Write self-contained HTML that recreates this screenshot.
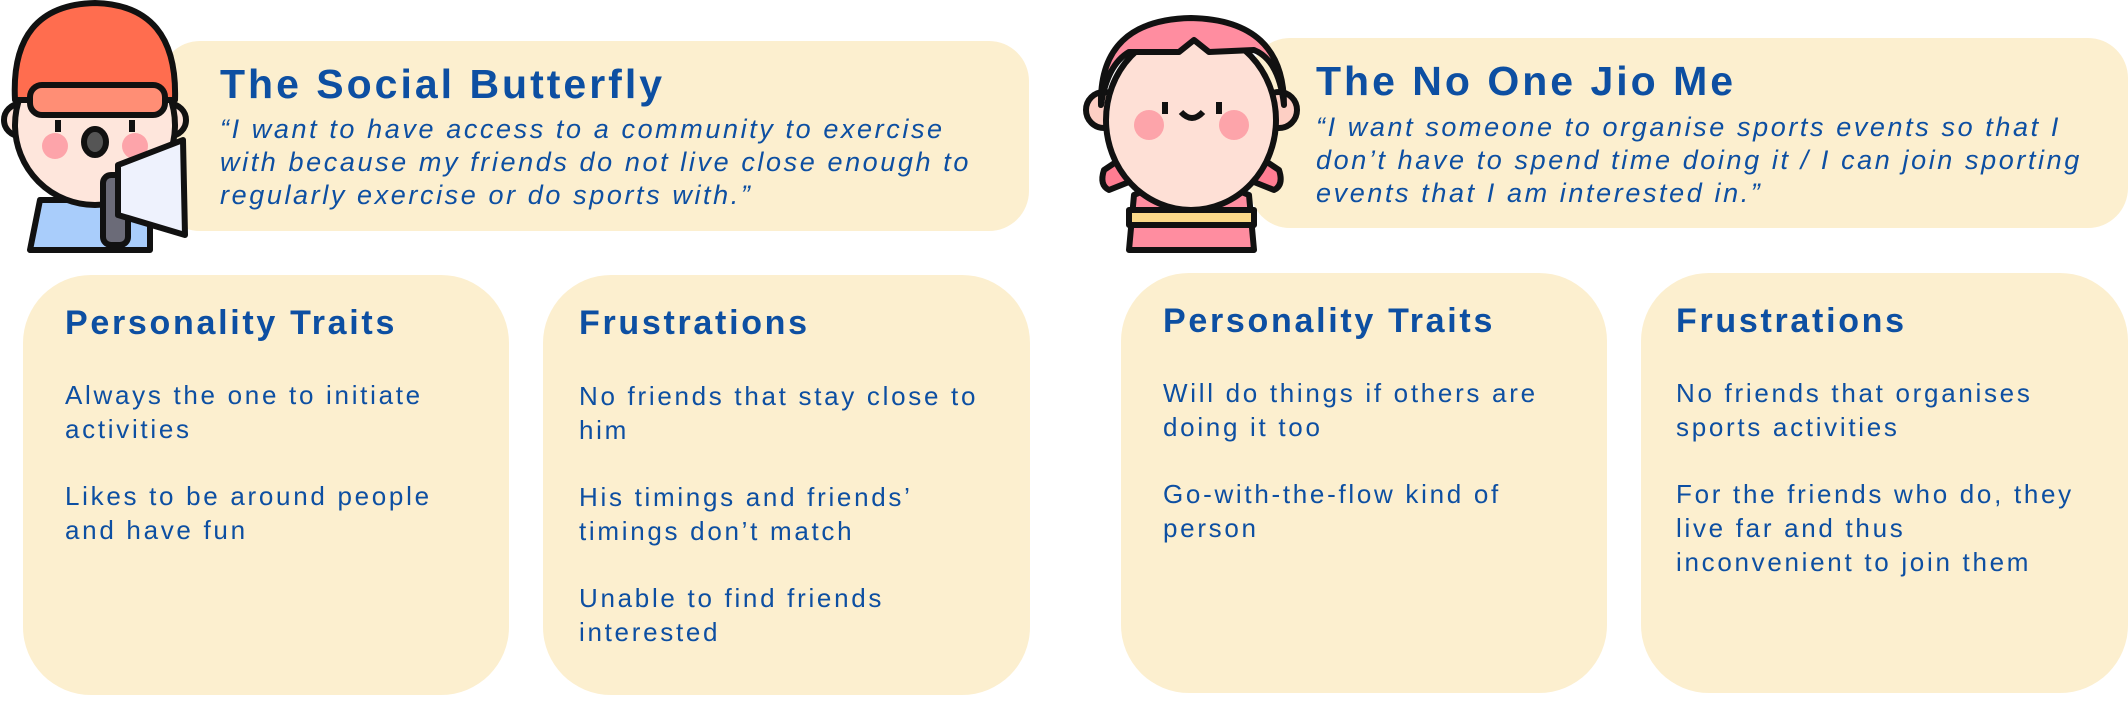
<!DOCTYPE html>
<html><head><meta charset="utf-8"><style>
*{margin:0;padding:0;box-sizing:border-box}
body{width:2128px;height:710px;background:#fff;position:relative;overflow:hidden;font-family:"Liberation Sans",sans-serif;color:#0d4fa2}
.b{position:absolute;background:#fcefcf}
.t{position:absolute;font-weight:bold;font-size:41px;letter-spacing:3px;top:60px}
.q{position:absolute;font-style:italic;font-size:27px;line-height:33px;letter-spacing:2.6px;white-space:nowrap}
.h{position:absolute;font-weight:bold;font-size:34px;letter-spacing:2.7px}
.p{position:absolute;font-size:26px;line-height:34px;letter-spacing:2.7px;white-space:nowrap}
.p div{margin-bottom:33px}
svg{position:absolute}
</style></head><body>
<div class="b" style="left:160px;top:41px;width:869px;height:190px;border-radius:40px"></div>
<div class="b" style="left:23px;top:275px;width:486px;height:420px;border-radius:68px"></div>
<div class="b" style="left:543px;top:275px;width:487px;height:420px;border-radius:68px"></div>
<div class="b" style="left:1250px;top:38px;width:878px;height:190px;border-radius:40px"></div>
<div class="b" style="left:1121px;top:273px;width:486px;height:420px;border-radius:68px"></div>
<div class="b" style="left:1641px;top:273px;width:487px;height:420px;border-radius:68px"></div>

<div class="t" style="left:220px;top:61px">The Social Butterfly</div>
<div class="q" style="left:220px;top:113px">“I want to have access to a community to exercise<br>with because my friends do not live close enough to<br>regularly exercise or do sports with.”</div>
<div class="h" style="left:65px;top:304px">Personality Traits</div>
<div class="p" style="left:65px;top:378px"><div>Always the one to initiate<br>activities</div><div>Likes to be around people<br>and have fun</div></div>
<div class="h" style="left:579px;top:304px">Frustrations</div>
<div class="p" style="left:579px;top:379px"><div>No friends that stay close to<br>him</div><div>His timings and friends’<br>timings don’t match</div><div>Unable to find friends<br>interested</div></div>

<div class="t" style="left:1316px;top:58px">The No One Jio Me</div>
<div class="q" style="left:1316px;top:111px">“I want someone to organise sports events so that I<br>don’t have to spend time doing it / I can join sporting<br>events that I am interested in.”</div>
<div class="h" style="left:1163px;top:302px">Personality Traits</div>
<div class="p" style="left:1163px;top:376px"><div>Will do things if others are<br>doing it too</div><div>Go-with-the-flow kind of<br>person</div></div>
<div class="h" style="left:1676px;top:302px">Frustrations</div>
<div class="p" style="left:1676px;top:376px"><div>No friends that organises<br>sports activities</div><div>For the friends who do, they<br>live far and thus<br>inconvenient to join them</div></div>

<svg style="left:0;top:0" width="200" height="260" viewBox="0 0 200 260" stroke="#111" stroke-width="6" stroke-linejoin="round">
<path d="M40 200 L30 250 L150 250 L150 200 Z" fill="#a9cdfb"/>
<circle cx="20" cy="120" r="16" fill="#fde3d8"/><circle cx="170" cy="120" r="16" fill="#fde3d8"/>
<ellipse cx="95" cy="125" rx="80" ry="80" fill="#fee6dc"/>
<path d="M15 100 Q10 5 95 3 Q178 5 175 100 Z" fill="#ff6d4f"/>
<rect x="30" y="85" width="135" height="30" rx="12" fill="#ff8e75"/>
<circle cx="55" cy="146" r="13" fill="#fda4aa" stroke="none"/><circle cx="135" cy="146" r="13" fill="#fda4aa" stroke="none"/>
<line x1="58" y1="120" x2="58" y2="132"/><line x1="132" y1="120" x2="132" y2="132"/>
<ellipse cx="95" cy="142" rx="11" ry="13" fill="#555"/>
<rect x="103" y="175" width="25" height="70" rx="8" fill="#6b6b78"/>
<path d="M118 165 L183 140 L185 235 L118 215 Z" fill="#eef2fd"/>
</svg>

<svg style="left:1079px;top:10px" width="225" height="245" viewBox="0 0 225 245" stroke="#111" stroke-width="6" stroke-linejoin="round">
<path d="M30 180 Q20 175 25 160 L40 150 L55 170 Z" fill="#ff7d92"/>
<path d="M195 180 Q205 175 200 160 L185 150 L170 170 Z" fill="#ff7d92"/>
<path d="M50 240 L55 185 Q110 160 170 185 L175 240 Z" fill="#ff8da0"/>
<rect x="50" y="200" width="125" height="15" fill="#fbd989"/>
<circle cx="25" cy="100" r="18" fill="#fdcfc4"/><circle cx="200" cy="100" r="18" fill="#fdcfc4"/>
<ellipse cx="112" cy="110" rx="85" ry="90" fill="#fee0d6"/>
<path d="M22 95 Q20 10 112 8 Q205 10 205 95 Q200 50 175 40 L130 42 L115 30 L100 42 L50 42 Q28 55 22 95Z" fill="#ff8da0"/>
<circle cx="70" cy="115" r="15" fill="#fda4aa" stroke="none"/><circle cx="155" cy="115" r="15" fill="#fda4aa" stroke="none"/>
<line x1="86" y1="92" x2="86" y2="104"/><line x1="140" y1="92" x2="140" y2="104"/>
<path d="M102 102 Q113 114 124 102" fill="none"/>
</svg>
</body></html>
